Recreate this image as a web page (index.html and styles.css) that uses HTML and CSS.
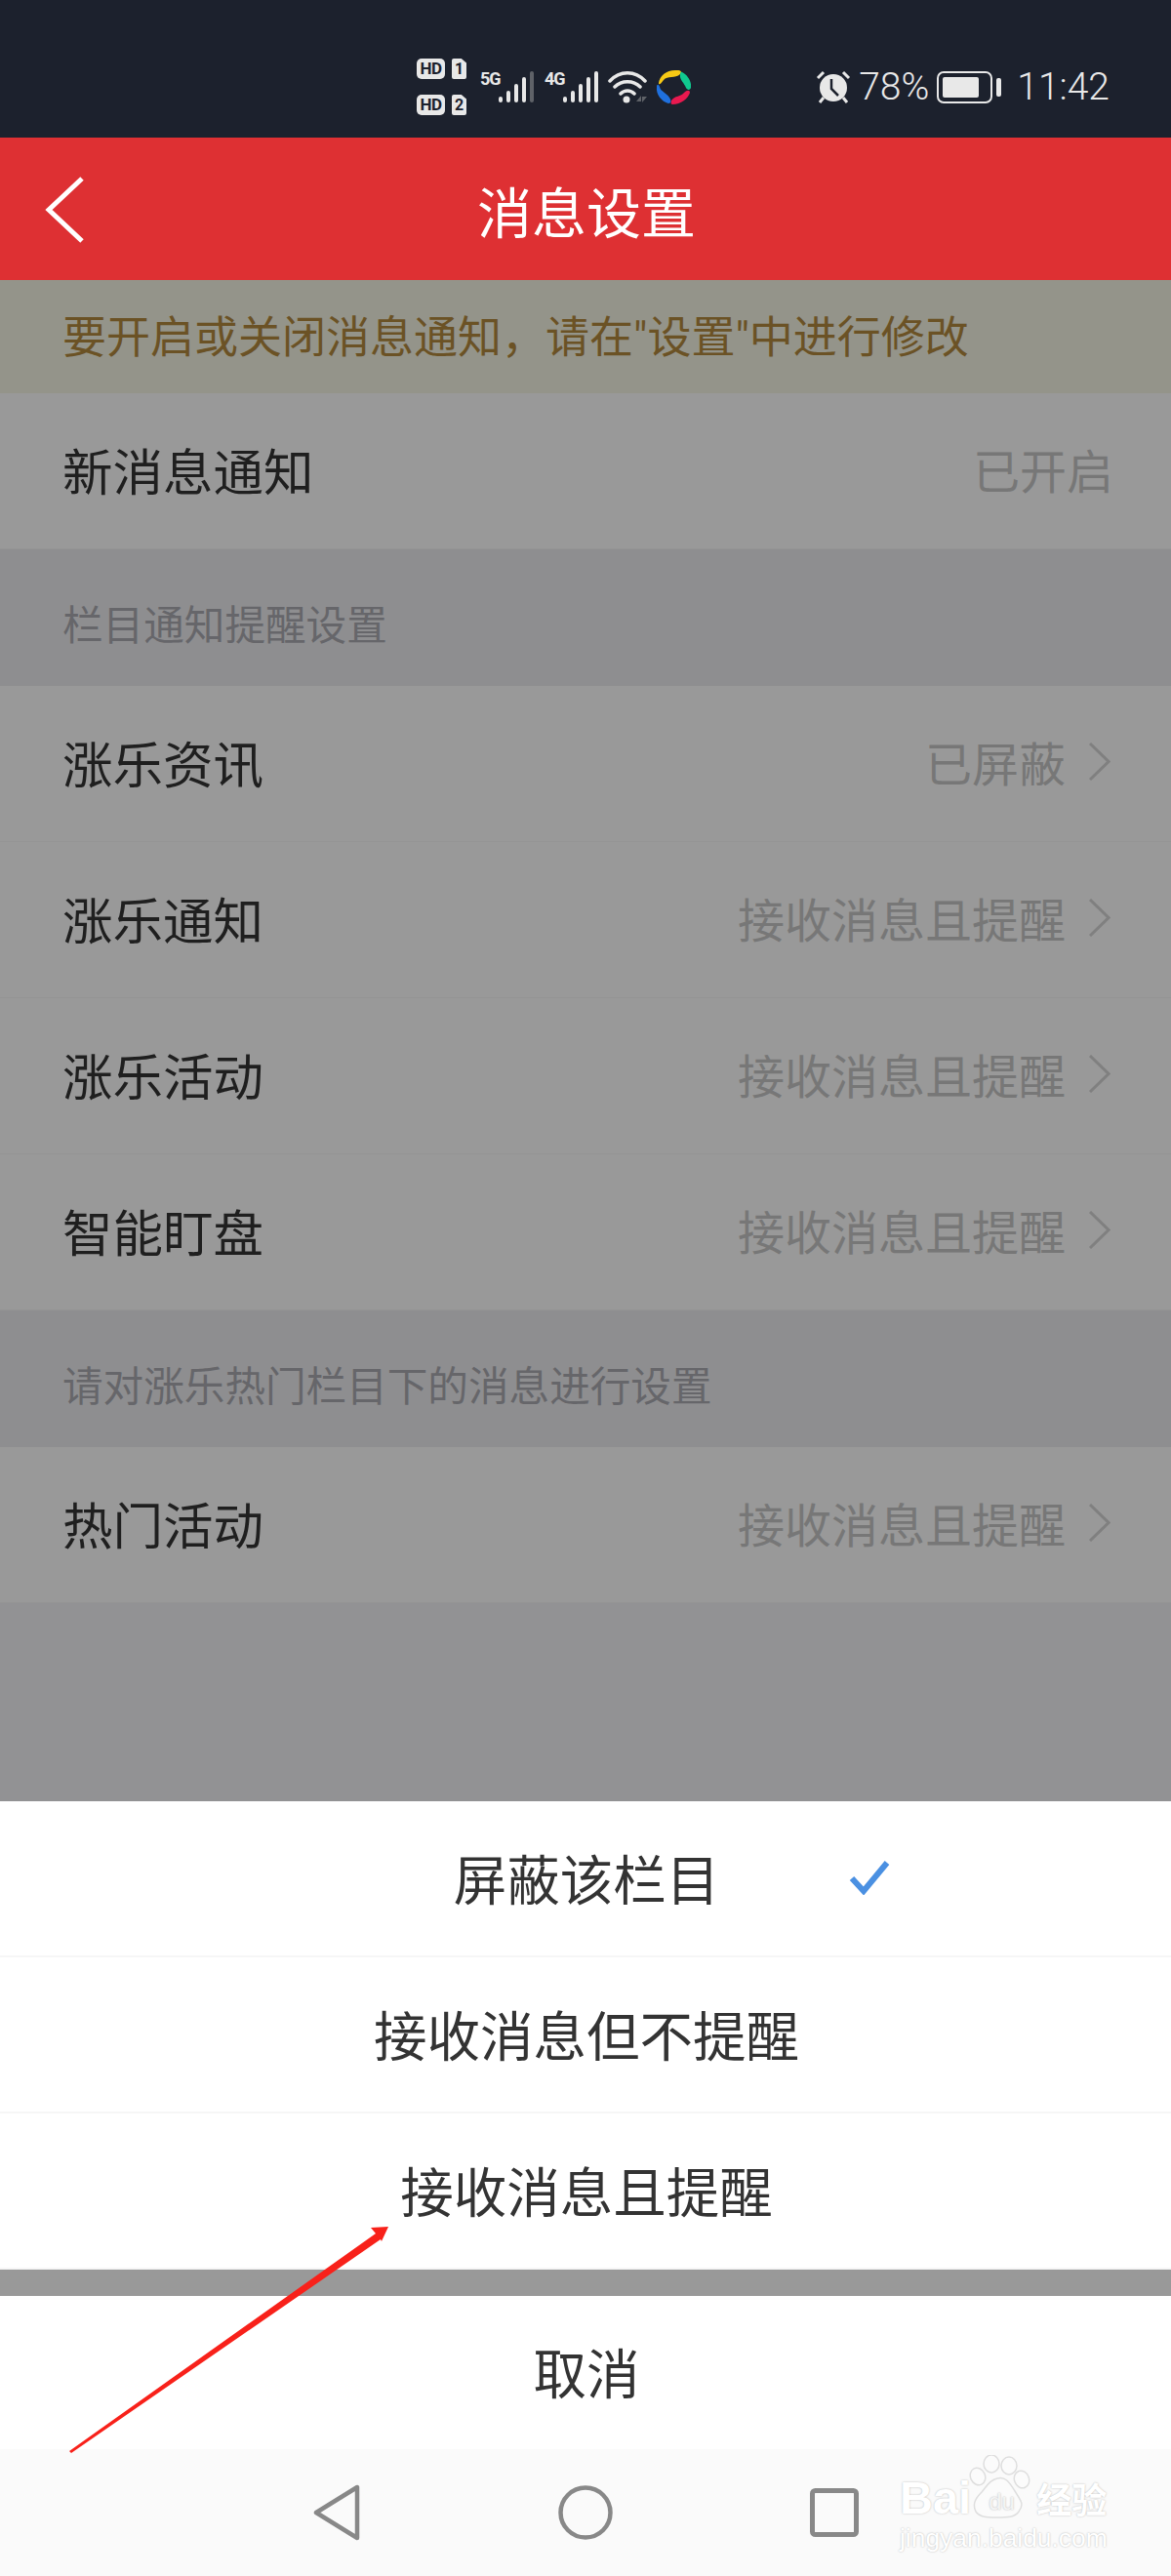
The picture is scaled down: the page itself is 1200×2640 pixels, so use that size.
FILE: index.html
```html
<!DOCTYPE html>
<html lang="zh-CN">
<head>
  <meta charset="UTF-8">
  <title>消息设置</title>
  <link rel="stylesheet" href="styles.css">
</head>
<body>
  <div class="status-bar">
    <div class="sims">
      <div class="sim"><span class="hd">HD</span><span class="sim-no">1</span></div>
      <div class="sim"><span class="hd">HD</span><span class="sim-no">2</span></div>
    </div>
    <div class="signal">
      <span class="net">5G</span>
      <svg width="38" height="34" viewBox="0 0 38 34" fill="none" stroke-width="4" stroke-linecap="round"><g stroke="#e8e8e8"><path d="M3 29v2M11 23v8M19 16v15M27 9v22"/></g><path d="M35 3v28" stroke="#5f6268"/></svg>
    </div>
    <div class="signal signal-two">
      <span class="net">4G</span>
      <svg width="38" height="34" viewBox="0 0 38 34" fill="none" stroke-width="4" stroke-linecap="round"><path d="M3 29v2M11 23v8M19 16v15M27 9v22M35 3v28" stroke="#e8e8e8"/></svg>
    </div>
    <svg class="wifi" width="41" height="34" viewBox="0 0 41 34" fill="none"><path d="M2 11C12 0 28 0 38 11M7 17c7-7 19-7 26 0M13 24c4-4 10-4 14 0" stroke="#e8e8e8" stroke-width="3.500" stroke-linecap="round"/><circle cx="19" cy="30" r="3.500" fill="#e8e8e8"/><path d="M34 26l-5 6h5zM35 33l5-6h-5z" fill="#5f6268"/></svg>
    <svg class="app-dot" width="36" height="36" viewBox="0 0 36 36"><path d="M3 14C4 6 12 0 22 1c4 0 5 2 3 4-5 5-13 1-17 6-2 3-5 6-5 3z" fill="#f7c915"/><path d="M27 3c6 3 10 10 9 16-1 3-4 2-5 0-2-5-7-9-6-13 0-3 1-4 2-3z" fill="#10c98f"/><path d="M1 18c-1 8 5 15 12 17 3 0 3-3 1-6-3-5-9-6-10-11-1-3-3-3-3 0z" fill="#1f70dd"/><path d="M17 36c9 0 16-6 18-12 0-3-3-3-6 0-3 4-10 3-13 8-1 3 0 4 1 4z" fill="#e8194f"/></svg>
    <div class="status-right">
      <svg class="alarm" width="36" height="34" viewBox="0 0 36 34" fill="none"><circle cx="18" cy="18" r="14" fill="#e8e8e8"/><path d="M16 9v10l7 7" stroke="#1c212d" stroke-width="2.500"/><path d="M2 8l6-6M34 8l-6-6M8 28l-4 5M28 28l4 5" stroke="#e8e8e8" stroke-width="3"/></svg>
      <span class="pct">78%</span>
      <svg class="battery" width="66" height="33" viewBox="0 0 66 33" fill="none"><rect x="1" y="1" width="55" height="31" rx="6" stroke="#e8e8e8" stroke-width="2"/><rect x="6" y="6" width="37" height="21" rx="2" fill="#e8e8e8"/><rect x="61" y="7" width="5" height="19" rx="2" fill="#e8e8e8"/></svg>
      <span class="clock">11:42</span>
    </div>
  </div>

  <header class="title-bar">
    <svg class="back" width="42" height="68" viewBox="0 0 42 68" fill="none"><path d="M38 2L4 34l34 32" stroke="#fff" stroke-width="5"/></svg>
    <h1>消息设置</h1>
  </header>

  <main class="settings">
    <div class="notice">要开启或关闭消息通知，请在"设置"中进行修改</div>
    <div class="row"><span class="row-name">新消息通知</span><span class="row-value">已开启</span></div>
    <div class="section-title">栏目通知提醒设置</div>
    <div class="row"><span class="row-name">涨乐资讯</span><span class="row-value">已屏蔽</span><svg class="chevron" width="23" height="39" viewBox="0 0 23 39" fill="none"><path d="M2 1l19 18.500L2 38" stroke="#808080" stroke-width="3"/></svg></div>
    <div class="row"><span class="row-name">涨乐通知</span><span class="row-value">接收消息且提醒</span><svg class="chevron" width="23" height="39" viewBox="0 0 23 39" fill="none"><path d="M2 1l19 18.500L2 38" stroke="#808080" stroke-width="3"/></svg></div>
    <div class="row"><span class="row-name">涨乐活动</span><span class="row-value">接收消息且提醒</span><svg class="chevron" width="23" height="39" viewBox="0 0 23 39" fill="none"><path d="M2 1l19 18.500L2 38" stroke="#808080" stroke-width="3"/></svg></div>
    <div class="row"><span class="row-name">智能盯盘</span><span class="row-value">接收消息且提醒</span><svg class="chevron" width="23" height="39" viewBox="0 0 23 39" fill="none"><path d="M2 1l19 18.500L2 38" stroke="#808080" stroke-width="3"/></svg></div>
    <div class="section-title">请对涨乐热门栏目下的消息进行设置</div>
    <div class="row"><span class="row-name">热门活动</span><span class="row-value">接收消息且提醒</span><svg class="chevron" width="23" height="39" viewBox="0 0 23 39" fill="none"><path d="M2 1l19 18.500L2 38" stroke="#808080" stroke-width="3"/></svg></div>
  </main>

  <section class="sheet">
    <div class="sheet-item">屏蔽该栏目
      <svg class="check" width="42" height="36" viewBox="0 0 42 36" fill="none"><path d="M3 19l12 13L39 3" stroke="#4a90e2" stroke-width="6"/></svg>
    </div>
    <div class="sheet-item">接收消息但不提醒</div>
    <div class="sheet-item">接收消息且提醒</div>
    <div class="sheet-cancel">取消</div>
  </section>

  <nav class="nav-bar">
    <svg class="nav-back" width="52" height="58" viewBox="0 0 52 58" fill="none"><path d="M46 3v52L4 29z" stroke="#888" stroke-width="4.500" stroke-linejoin="round"/></svg>
    <svg class="nav-home" width="56" height="56" viewBox="0 0 56 56" fill="none"><circle cx="28" cy="28" r="25.500" stroke="#888" stroke-width="4.500"/></svg>
    <svg class="nav-recent" width="50" height="50" viewBox="0 0 50 50" fill="none"><rect x="2.500" y="2.500" width="45" height="45" rx="3" stroke="#888" stroke-width="5"/></svg>
  </nav>

  <svg class="arrow" width="330" height="235" viewBox="0 0 330 235"><path d="M1 232L315 9l-5-6 18-1-7 15-1-2L3 234z" fill="#f8211a"/></svg>

  <div class="watermark">
    <svg class="paw" width="70" height="66" viewBox="0 0 70 66" fill="#fbfbfb" stroke="#dedede" stroke-width="1.500">
      <ellipse cx="10" cy="22" rx="7.500" ry="9" transform="rotate(-25 10 22)"/>
      <ellipse cx="24" cy="9" rx="8" ry="9"/>
      <ellipse cx="42" cy="11" rx="8" ry="9"/>
      <ellipse cx="55" cy="25" rx="7.500" ry="9" transform="rotate(-20 55 25)"/>
      <path d="M30 24c8-2 12 3 18 13 6 10 10 13 4 21-4 6-12 6-22 6S12 64 8 58c-4-8 0-14 6-20 5-6 8-12 16-14z"/>
    </svg>
    <div class="mark-top"><span>Bai</span><span class="mark-du">du</span><span class="mark-cn">经验</span></div>
    <div class="mark-url">jingyan.baidu.com</div>
  </div>
</body>
</html>
```

FILE: styles.css
```css
* {
  box-sizing: border-box;
}
body {
  margin: 0;
  width: 1200px;
  height: 2640px;
  position: relative;
  display: flex;
  flex-direction: column;
  overflow: hidden;
  font-family: "Noto Sans CJK SC", "Noto Sans", sans-serif;
  background-color: #929294;
}
.status-bar {
  height: 141px;
  background-color: #1c212d;
  color: #e8e8e8;
  display: flex;
  align-items: center;
  padding: 37px 63px 0 427px;
}
.sims {
  display: flex;
  flex-direction: column;
  gap: 16px;
  margin-right: 14px;
}
.sim {
  display: flex;
  gap: 7px;
}
.hd {
  width: 29px;
  background-color: #e8e8e8;
  color: #1c212d;
  font: bold 17px/21px "Roboto", sans-serif;
  letter-spacing: -0.500px;
  text-align: center;
  border-radius: 5px;
}
.sim-no {
  width: 15px;
  background-color: #e8e8e8;
  color: #1c212d;
  font: bold 16px/21px "Roboto", sans-serif;
  text-align: center;
  border-radius: 2px;
  clip-path: polygon(0 0, 65% 0, 100% 22%, 100% 100%, 0 100%);
}
.signal {
  display: flex;
  align-items: flex-start;
  margin-right: 10px;
}
.signal-two {
  margin-right: 9px;
}
.net {
  width: 18px;
  font: bold 18px/18px "Roboto", sans-serif;
  letter-spacing: -1px;
}
.wifi {
  margin-right: 8px;
}
.status-right {
  margin-left: auto;
  display: flex;
  align-items: center;
}
.pct,
.clock {
  font: 300 39px/44px "Roboto", sans-serif;
}
.alarm {
  margin-right: 8px;
}
.battery {
  margin: 0 16px 0 8px;
}
.title-bar {
  height: 146px;
  background-color: #de3033;
  position: relative;
  display: flex;
  align-items: center;
  justify-content: center;
  padding-left: 2px;
}
.title-bar h1 {
  margin: 0;
  color: #fff;
  font-size: 56px;
  font-weight: 400;
}
.back {
  position: absolute;
  left: 46px;
  top: 40px;
}
.settings {
  height: 1559px;
}
.notice {
  height: 116px;
  background-color: #94948a;
  color: #6b5225;
  font-family: "Roboto", "Noto Sans CJK SC", sans-serif;
  font-size: 45px;
  line-height: 120px;
  padding-left: 64px;
}
.row {
  height: 160px;
  background-color: #999999;
  border-bottom: 1px solid #949494;
  display: flex;
  align-items: center;
  padding: 0 62px 5px 64px;
}
.row-name {
  flex: 1;
  color: #1f1f1f;
  font-size: 51.500px;
}
.row-value {
  color: #777777;
  font-size: 48px;
}
.row-value:last-child {
  margin-right: -3px;
}
.chevron {
  margin-left: 23px;
}
.section-title {
  height: 140px;
  background-color: #8e8e90;
  color: #66666a;
  font-size: 41.600px;
  line-height: 150px;
  padding-left: 64px;
}
.sheet {
  background-color: #999;
}
.sheet-item,
.sheet-cancel {
  background-color: #fff;
  color: #333;
  font-size: 54.500px;
  text-align: center;
  position: relative;
  padding-left: 2px;
}
.sheet-item {
  height: 160px;
  line-height: 156px;
  border-bottom: 2px solid #f6f6f6;
}
.sheet-cancel {
  margin-top: 27px;
  height: 157px;
  line-height: 153px;
}
.check {
  position: absolute;
  left: 870px;
  top: 60px;
}
.nav-bar {
  height: 130px;
  background-color: #fafafa;
  position: relative;
}
.nav-back,
.nav-home,
.nav-recent {
  position: absolute;
}
.nav-back {
  left: 320px;
  top: 36px;
}
.nav-home {
  left: 572px;
  top: 37px;
}
.nav-recent {
  left: 830px;
  top: 40px;
}
.arrow {
  position: absolute;
  left: 70px;
  top: 2280px;
}
.watermark {
  position: absolute;
  left: 922px;
  top: 2536px;
  width: 220px;
  color: #fff;
  text-shadow: 0 0 2px #b4b4b4;
}
.paw {
  position: absolute;
  left: 70px;
  top: -20px;
}
.mark-top {
  position: relative;
  display: flex;
  align-items: center;
  height: 48px;
  font: bold 47px/48px "Liberation Sans", sans-serif;
  white-space: nowrap;
}
.mark-du {
  width: 67px;
  padding: 8px 0 0 18px;
  font-size: 24px;
  font-weight: 400;
  color: #f4f4f4;
}
.mark-cn {
  font: bold 36px/48px "Noto Sans CJK SC", sans-serif;
}
.mark-url {
  margin-top: 2px;
  font: 400 26.400px/30px "Liberation Sans", sans-serif;
  white-space: nowrap;
}
```
